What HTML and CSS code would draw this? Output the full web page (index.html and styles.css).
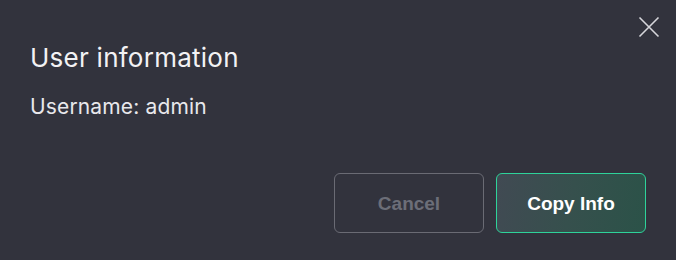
FILE: index.html
```html
<!DOCTYPE html>
<html>
<head>
<meta charset="utf-8">
<link rel="stylesheet" href="styles.css">
</head>
<body>
<div class="dialog">
  <button class="close" aria-label="Close">
    <svg width="22" height="22" viewBox="0 0 22 22"><path d="M1.5 1.5L20.5 20.5M20.5 1.5L1.5 20.5" stroke="#d6d6db" stroke-width="1.6" fill="none"/></svg>
  </button>
  <h2 class="title">User information</h2>
  <p class="info">Username: admin</p>
  <div class="actions">
    <button class="btn cancel">Cancel</button>
    <button class="btn primary">Copy Info</button>
  </div>
</div>
</body>
</html>
```
FILE: styles.css
```css
html, body {
  margin: 0;
  padding: 0;
  background: #32333d;
}
.dialog {
  position: relative;
  width: 676px;
  height: 260px;
  box-sizing: border-box;
  padding: 42px 30px 27px 30px;
  display: flex;
  flex-direction: column;
  font-family: Inter, "Noto Sans", sans-serif;
  color: #f2f2f4;
}
.close {
  position: absolute;
  top: 16px;
  right: 16px;
  width: 22px;
  height: 22px;
  padding: 0;
  border: 0;
  background: none;
}
.close svg { display: block; }
.title {
  margin: 0;
  font-size: 26px;
  font-weight: 400;
  line-height: 32px;
  letter-spacing: 0.25px;
}
.info {
  margin: 21px 0 0;
  font-size: 21px;
  line-height: 24px;
  letter-spacing: 0.15px;
  color: #e8e8ec;
}
.actions {
  margin-top: auto;
  display: flex;
  justify-content: flex-end;
  gap: 12px;
}
.btn {
  width: 150px;
  height: 60px;
  border-radius: 6px;
  font-family: "Liberation Sans", Arial, sans-serif;
  font-weight: 700;
  font-size: 19px;
  box-sizing: border-box;
  padding: 1px 0 0;
}
.cancel {
  background: transparent;
  border: 1px solid #6a6b74;
  color: #6c6e78;
}
.primary {
  background: linear-gradient(100deg, #414a53 0%, #36504d 50%, #2b5248 100%);
  border: 1px solid #2ed39a;
  color: #ffffff;
}
```
